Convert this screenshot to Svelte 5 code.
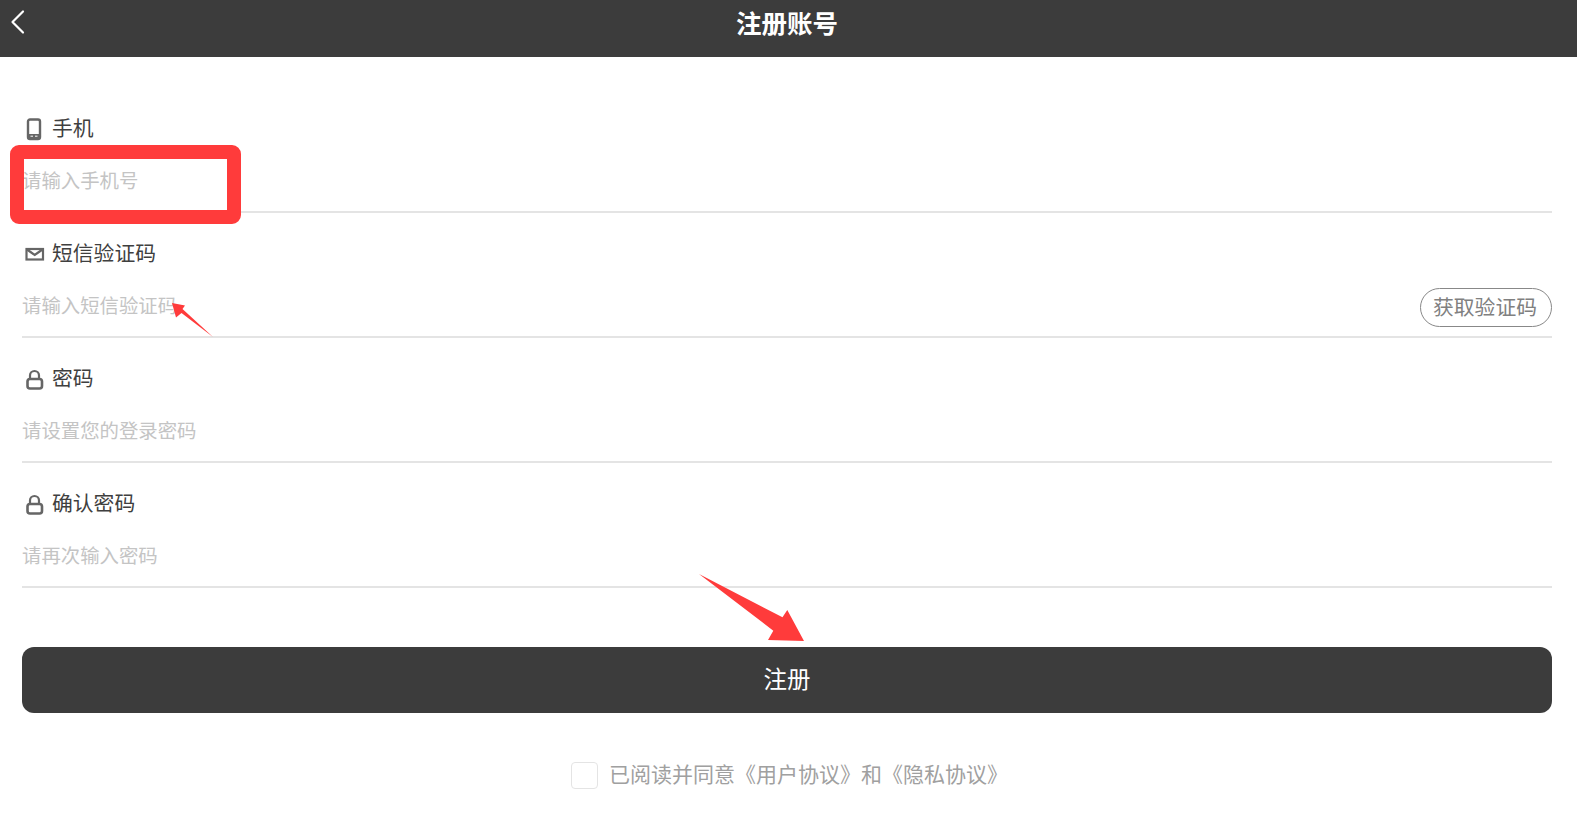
<script lang="ts">
	const fields = [
		{ label: '手机', icon: 'phone', placeholder: '请输入手机号' },
		{ label: '短信验证码', icon: 'mail', placeholder: '请输入短信验证码', code: true },
		{ label: '密码', icon: 'lock', placeholder: '请设置您的登录密码', type: 'password' },
		{ label: '确认密码', icon: 'lock', placeholder: '请再次输入密码', type: 'password' }
	];
</script>

<div class="page">
	<header class="topbar">
		<button class="back" type="button" aria-label="返回">
			<svg viewBox="0 0 16 26" width="16" height="26" fill="none" stroke="#fff" stroke-width="2.2" stroke-linecap="round" stroke-linejoin="round">
				<path d="M13 2.5 2.5 13 13 23.500" />
			</svg>
		</button>
		<h1>注册账号</h1>
	</header>

	<form class="form" onsubmit={(e) => e.preventDefault()}>
		{#each fields as field}
			<div class="field">
				<div class="label">
					<svg class="icon" viewBox="0 0 24 24" width="24" height="24">
						{#if field.icon === 'phone'}
							<rect x="6" y="2.500" width="12" height="19.500" rx="2" fill="none" stroke="#666" stroke-width="2.400" />
							<path d="M6 17h12v4.500H6z" fill="#666" />
							<path d="M8.500 19.200h2.500M13 19.200h2.500" stroke="#fff" stroke-width="1" />
						{:else if field.icon === 'mail'}
							<rect x="4.500" y="7" width="16.500" height="10.500" fill="none" stroke="#666" stroke-width="2.200" />
							<path d="M5 7.500 12.700 13l7.800-5.500" fill="none" stroke="#666" stroke-width="2.200" />
						{:else}
							<path d="M8 12V8.500a4.500 4.500 0 0 1 9 0V12" fill="none" stroke="#666" stroke-width="2.200" />
							<rect x="5.500" y="12" width="14.500" height="9.500" rx="2.500" fill="none" stroke="#666" stroke-width="2.600" />
						{/if}
					</svg>
					<span>{field.label}</span>
				</div>
				<div class="control">
					<input type={field.type ?? 'text'} placeholder={field.placeholder} />
					{#if field.code}
						<button class="code" type="button">获取验证码</button>
					{/if}
				</div>
			</div>
		{/each}

		<button class="submit" type="submit">注册</button>

		<label class="agree">
			<input type="checkbox" />
			<span class="box"></span>
			<span class="terms">已阅读并同意《用户协议》和《隐私协议》</span>
		</label>
	</form>

	<!-- annotations drawn over the screenshot -->
	<div class="mark"></div>
	<svg class="arrows" viewBox="0 0 1577 827" width="1577" height="827">
		<polygon points="172,303 185,305.500 182.500,309 213,337 181.500,313 176,317.500" />
		<polygon points="699,574 782.500,617.300 787.300,610 804,641 768,640 773.300,630.700" />
	</svg>
</div>

<style>
	:global(body) {
		margin: 0;
		background: #fff;
	}

	.page {
		position: relative;
		width: 1577px;
		height: 827px;
		overflow: hidden;
		font-family: 'Noto Sans CJK SC', 'Noto Sans', sans-serif;
	}

	.topbar {
		display: grid;
		grid-template-columns: 1fr auto 1fr;
		align-items: center;
		height: 44px;
		padding: 0 3px 13px 0;
		background: #3c3c3c;
	}

	.back {
		justify-self: start;
		display: flex;
		margin-left: 10px;
		padding: 0;
		border: none;
		background: none;
	}

	.topbar h1 {
		margin: 0;
		font-size: 25.500px;
		font-weight: 700;
		line-height: 44px;
		color: #fff;
	}

	.form {
		display: flex;
		flex-direction: column;
		padding: 31px 25px 0 22px;
	}

	.field {
		height: 125px;
		box-sizing: border-box;
		padding-top: 23px;
		border-bottom: 2px solid #e4e4e4;
	}

	.label {
		display: flex;
		align-items: center;
		gap: 6px;
		height: 32px;
		font-size: 20.800px;
		color: #3f3f3f;
	}

	.icon {
		margin-top: 4px;
	}

	.control {
		display: flex;
		align-items: center;
		height: 40px;
		margin-top: 17px;
	}

	.control input {
		flex: 1;
		min-width: 0;
		height: 100%;
		padding: 0 0 2px;
		border: none;
		outline: none;
		background: none;
		font: inherit;
		font-size: 19.400px;
		color: #333;
	}

	.control input::placeholder {
		color: #c4c4c4;
		opacity: 1;
	}

	.code {
		width: 132px;
		height: 39px;
		margin-top: 4px;
		padding: 0 2px 2px 0;
		border: 1px solid #888;
		border-radius: 20px;
		background: #fff;
		font: inherit;
		font-size: 20.800px;
		color: #808080;
	}

	.submit {
		height: 66px;
		margin-top: 59px;
		padding: 0 0 5px;
		border: none;
		border-radius: 12px;
		background: #3c3c3c;
		font: inherit;
		font-size: 23.500px;
		color: #fff;
	}

	.agree {
		display: flex;
		justify-content: center;
		align-items: center;
		gap: 11px;
		height: 32px;
		margin-top: 45px;
		padding-left: 5px;
		font-size: 21px;
		line-height: 26px;
		color: #a0a0a0;
	}

	.agree input {
		display: none;
	}

	.box {
		width: 25px;
		height: 25px;
		margin-top: 3px;
		border: 1px solid #e4e4e4;
		border-radius: 4px;
	}

	.terms {
		margin-bottom: 3px;
	}

	.mark {
		position: absolute;
		left: 10px;
		top: 145px;
		width: 203px;
		height: 51px;
		border: 14px solid #ff3b3b;
		border-radius: 9px;
		pointer-events: none;
	}

	.arrows {
		position: absolute;
		inset: 0;
		fill: #ff3b3b;
		pointer-events: none;
	}
</style>
